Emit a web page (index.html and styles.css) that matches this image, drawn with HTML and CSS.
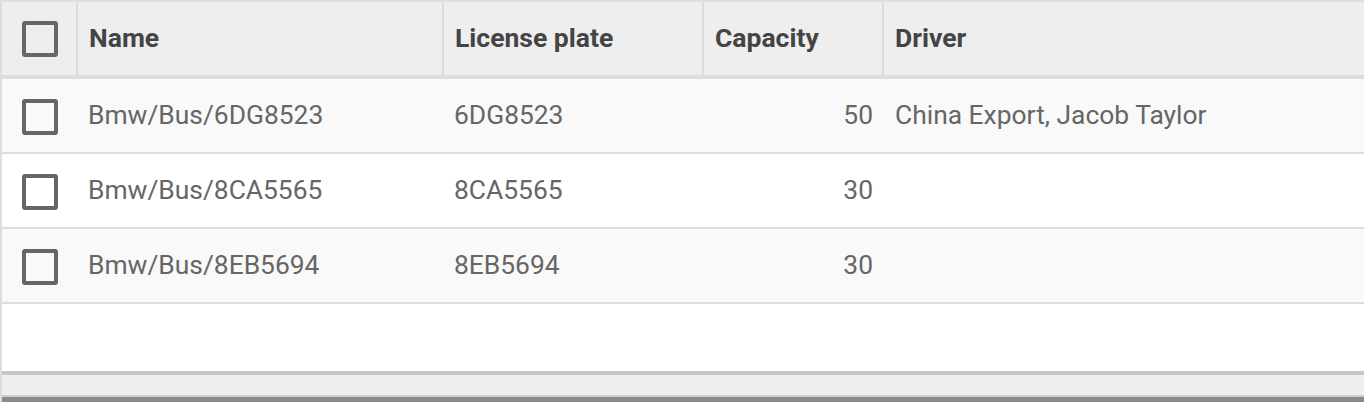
FILE: index.html
```html
<!DOCTYPE html>
<html lang="en">
<head>
<meta charset="utf-8">
<title>Buses</title>
<link rel="stylesheet" href="styles.css">
</head>
<body>
<div class="grid">
  <div class="row head">
    <div class="cell check"><span class="box"></span></div>
    <div class="cell">Name</div>
    <div class="cell">License plate</div>
    <div class="cell">Capacity</div>
    <div class="cell">Driver</div>
  </div>
  <div class="body">
    <div class="row odd">
      <div class="cell check"><span class="box"></span></div>
      <div class="cell">Bmw/Bus/6DG8523</div>
      <div class="cell">6DG8523</div>
      <div class="cell num">50</div>
      <div class="cell driver">China Export, Jacob Taylor</div>
    </div>
    <div class="row">
      <div class="cell check"><span class="box"></span></div>
      <div class="cell">Bmw/Bus/8CA5565</div>
      <div class="cell">8CA5565</div>
      <div class="cell num">30</div>
      <div class="cell driver"></div>
    </div>
    <div class="row odd">
      <div class="cell check"><span class="box"></span></div>
      <div class="cell">Bmw/Bus/8EB5694</div>
      <div class="cell">8EB5694</div>
      <div class="cell num">30</div>
      <div class="cell driver"></div>
    </div>
    <div class="filler"></div>
  </div>
  <div class="hscroll"></div>
</div>
</body>
</html>
```

FILE: styles.css
```css
* { box-sizing: border-box; }
html, body { margin: 0; padding: 0; background: #fff; }
body {
  font-family: Roboto, "Liberation Sans", sans-serif;
  width: 1364px;
  height: 402px;
  overflow: hidden;
}
.grid {
  height: 402px;
  border-top: 2px solid #dddddd;
  border-left: 2px solid #dddddd;
  display: flex;
  flex-direction: column;
}
.row {
  display: grid;
  grid-template-columns: 74px 366px 260px 180px 1fr;
  height: 75px;
  border-bottom: 2px solid #dddddd;
  background: #ffffff;
}
.row.odd { background: #f9f9f9; }
.cell {
  display: flex;
  align-items: center;
  padding: 0 9px 2px 12px;
  font-size: 26.4px;
  color: #666666;
  white-space: nowrap;
}
.cell.driver { padding-left: 13px; }
.cell.num { justify-content: flex-end; }
.cell.check { justify-content: center; padding: 0; }
.head {
  height: 77px;
  background: #eeeeee;
  border-bottom: 4px solid #dddddd;
}
.head .cell {
  font-weight: 700;
  font-size: 26.5px;
  color: #444444;
  padding: 0 10px 3px 11px;
}
.head .cell + .cell { border-left: 2px solid #dddddd; }
.head .cell.check { padding: 0 0 0 2px; }
.box {
  width: 36px;
  height: 36px;
  border: 4px solid #666666;
  border-radius: 3px;
  background: transparent;
}
.body .cell.check { padding-top: 3px; padding-left: 2px; }
.body { display: flex; flex-direction: column; flex: 1; }
.filler { flex: 1; }
.hscroll {
  height: 31px;
  background: #eeeeee;
  border-top: 4px solid #c6c6c6;
  border-bottom: 5px solid #8a8a8a;
  box-shadow: inset 0 -2px 0 #cccccc;
}
```
